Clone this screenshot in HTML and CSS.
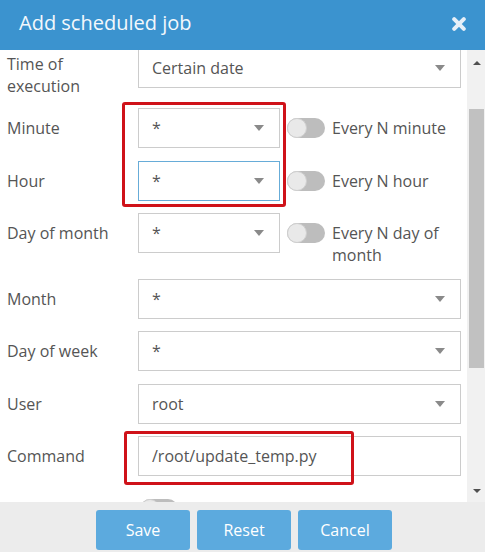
FILE: index.html
```html
<!DOCTYPE html>
<html lang="en">
<head>
<meta charset="utf-8">
<title>Add scheduled job</title>
<link rel="stylesheet" href="styles.css">
</head>
<body>
<div class="dialog">
  <header class="dlg-head">
    <h1 class="dlg-title">Add scheduled job</h1>
    <span class="dlg-close" aria-label="Close">
      <svg width="14" height="14" viewBox="0 0 14 14"><path d="M2.2 2.2 L11.8 11.8 M11.8 2.2 L2.2 11.8" stroke="#e6eff8" stroke-width="4" stroke-linecap="round"/></svg>
    </span>
  </header>

  <div class="dlg-body">
    <div class="form">
      <div class="row row-first">
        <div class="lbl lbl-first">Time of<br>execution</div>
        <div class="ctl">
          <div class="select wide"><span>Certain date</span><i class="caret"></i></div>
        </div>
      </div>

      <div class="row">
        <div class="lbl">Minute</div>
        <div class="ctl">
          <div class="select small"><span>*</span><i class="caret"></i></div>
          <div class="opt"><span class="toggle"><span class="knob"></span></span><span class="opt-text">Every N minute</span></div>
        </div>
      </div>

      <div class="row">
        <div class="lbl">Hour</div>
        <div class="ctl">
          <div class="select small focused"><span>*</span><i class="caret"></i></div>
          <div class="opt"><span class="toggle"><span class="knob"></span></span><span class="opt-text">Every N hour</span></div>
        </div>
      </div>

      <div class="row">
        <div class="lbl">Day of month</div>
        <div class="ctl">
          <div class="select small"><span>*</span><i class="caret"></i></div>
          <div class="opt"><span class="toggle"><span class="knob"></span></span><span class="opt-text">Every N day of month</span></div>
        </div>
      </div>

      <div class="row">
        <div class="lbl">Month</div>
        <div class="ctl">
          <div class="select wide"><span>*</span><i class="caret"></i></div>
        </div>
      </div>

      <div class="row">
        <div class="lbl">Day of week</div>
        <div class="ctl">
          <div class="select wide"><span>*</span><i class="caret"></i></div>
        </div>
      </div>

      <div class="row">
        <div class="lbl">User</div>
        <div class="ctl">
          <div class="select wide"><span>root</span><i class="caret"></i></div>
        </div>
      </div>

      <div class="row">
        <div class="lbl">Command</div>
        <div class="ctl">
          <div class="select wide input"><span>/root/update_temp.py</span></div>
        </div>
      </div>

      <div class="row row-last">
        <div class="lbl">Hide output</div>
        <div class="ctl ctl-toggle">
          <div class="opt"><span class="toggle"><span class="knob"></span></span><span class="opt-text">Send the output to the log file</span></div>
        </div>
      </div>
    </div>

    <div class="scrollbar">
      <div class="sb-btn sb-up"><i class="sb-arrow up"></i></div>
      <div class="sb-track"><div class="sb-thumb"></div></div>
      <div class="sb-btn sb-down"><i class="sb-arrow down"></i></div>
    </div>
  </div>

  <footer class="dlg-foot">
    <button class="btn">Save</button>
    <button class="btn">Reset</button>
    <button class="btn">Cancel</button>
  </footer>

  <div class="mark mark-time"></div>
  <div class="mark mark-cmd"></div>
</div>
</body>
</html>
```

FILE: styles.css
```css
* { box-sizing: border-box; }

html, body {
  margin: 0;
  padding: 0;
  background: #ffffff;
}

body {
  font-family: "Open Sans", "Liberation Sans", sans-serif;
  font-size: 16px;
  color: #555555;
}

.dialog {
  position: relative;
  width: 485px;
  height: 552px;
  overflow: hidden;
  display: flex;
  flex-direction: column;
}

.dlg-head {
  flex: none;
  height: 50px;
  background: #3b93cf;
  display: flex;
  align-items: flex-start;
  justify-content: space-between;
  padding: 0 19px 0 19px;
}

.dlg-title {
  margin: 0;
  padding-top: 10px;
  font-size: 20px;
  font-weight: 400;
  line-height: 26px;
  color: #f3f8fc;
}

.dlg-close {
  display: block;
  margin-top: 17px;
  width: 14px;
  height: 14px;
}

.dlg-close svg { display: block; }

.dlg-body {
  flex: none;
  height: 452px;
  display: flex;
  overflow: hidden;
  background: #ffffff;
}

.form {
  flex: 1;
  margin-top: -2px;
  padding: 0 6px 0 7px;
}

.row {
  display: flex;
  align-items: flex-start;
  margin-bottom: 12.5px;
}

.row-first { margin-bottom: 11px; }

.lbl {
  flex: none;
  width: 131px;
  padding-top: 9px;
  line-height: 22px;
  color: #555555;
}

.lbl-first { padding-top: 5px; }

.ctl {
  flex: 1;
  display: flex;
  align-items: flex-start;
  gap: 7px;
  min-width: 0;
}

.ctl-toggle { padding-left: 2px; }

.select {
  height: 40px;
  border: 1px solid #cccccc;
  background: #ffffff;
  display: flex;
  align-items: center;
  justify-content: space-between;
  padding: 0 15px 0 13px;
  line-height: 22px;
  color: #555555;
}

.select.wide { flex: 1; }
.select.small { flex: none; width: 142px; }
.select.focused { border-color: #67acd8; }

.caret {
  display: block;
  width: 0;
  height: 0;
  border-left: 5.5px solid transparent;
  border-right: 5.5px solid transparent;
  border-top: 6px solid #8a8a8a;
}

.opt {
  flex: 1;
  display: flex;
  align-items: flex-start;
  gap: 7px;
  min-width: 0;
}

.toggle {
  flex: none;
  position: relative;
  display: block;
  width: 38px;
  height: 20px;
  margin-top: 10px;
  border-radius: 10px;
  background: #bdbdbd;
}

.knob {
  position: absolute;
  left: 0;
  top: 0;
  width: 20px;
  height: 20px;
  border-radius: 50%;
  background: #e9e9e9;
  border: 1px solid #cfcfcf;
}

.opt-text {
  padding-top: 9px;
  line-height: 22px;
  color: #555555;
}

.scrollbar {
  flex: none;
  width: 18px;
  background: #f1f1f1;
  display: flex;
  flex-direction: column;
}

.sb-btn {
  flex: none;
  display: flex;
  align-items: center;
  justify-content: center;
  padding-left: 1px;
}

.sb-up { height: 25px; }
.sb-down { height: 23px; }

.sb-arrow {
  display: block;
  width: 0;
  height: 0;
  border-left: 4px solid transparent;
  border-right: 4px solid transparent;
}

.sb-arrow.up { border-bottom: 4px solid #505050; }
.sb-arrow.down { border-top: 4px solid #505050; }

.sb-track {
  flex: 1;
  padding-top: 34px;
}

.sb-thumb {
  margin-left: 2px;
  width: 15px;
  height: 259px;
  background: #c1c1c1;
}

.dlg-foot {
  flex: none;
  height: 50px;
  background: #ececec;
  display: flex;
  justify-content: center;
  align-items: flex-start;
  gap: 7px;
  padding: 8px 0 0 3px;
}

.btn {
  width: 94px;
  height: 40px;
  border: none;
  border-radius: 3px;
  background: #5caade;
  color: #ffffff;
  font-family: "Open Sans", "Liberation Sans", sans-serif;
  font-size: 16px;
  line-height: 22px;
  padding: 0;
}

.mark {
  position: absolute;
  border: 3px solid #cf1219;
  border-radius: 3px;
  pointer-events: none;
}

.mark-time {
  left: 122px;
  top: 102px;
  width: 164px;
  height: 105px;
}

.mark-cmd {
  left: 124px;
  top: 431px;
  width: 230px;
  height: 54px;
}
```
